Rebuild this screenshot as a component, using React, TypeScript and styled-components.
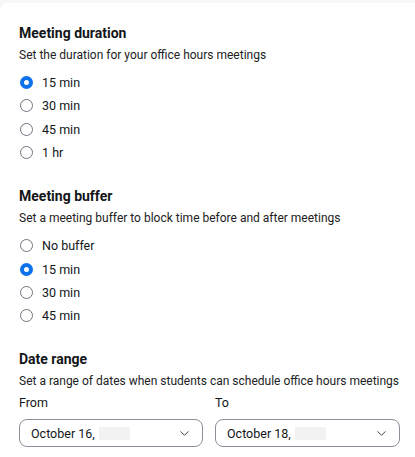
import React, { useState } from "react";
import styled, { createGlobalStyle } from "styled-components";

const GlobalStyle = createGlobalStyle`
  html, body {
    margin: 0;
    padding: 0;
    background: #f7f7f8;
  }
  body {
    font-family: Roboto, "Noto Sans", sans-serif;
    color: #131619;
  }
`;

const Card = styled.div`
  margin-top: 3px;
  background: #ffffff;
  border-top-left-radius: 8px;
  min-height: 454px;
  padding: 20px 10px 0 19px;
  box-sizing: border-box;
`;

const Section = styled.section`
  & + & {
    margin-top: 22px;
  }
`;

const Title = styled.h3`
  margin: 0;
  font-size: 14px;
  font-weight: 700;
  line-height: 20px;
`;

const Subtitle = styled.p`
  margin: 3px 0 7px;
  font-size: 12px;
  line-height: 18px;
  color: #222;
`;

const Options = styled.div`
  display: flex;
  flex-direction: column;
`;

const OptionRow = styled.label`
  display: flex;
  align-items: center;
  gap: 9px;
  height: 23.3px;
  font-size: 12.5px;
  cursor: pointer;
`;

const RadioDot = styled.span<{ $checked: boolean }>`
  width: 13px;
  height: 13px;
  border-radius: 50%;
  box-sizing: border-box;
  margin-left: 1px;
  border: ${(p) => (p.$checked ? "4.5px solid #0e72ed" : "1px solid #6e7680")};
  background: #fff;
`;

const Fields = styled.div`
  display: grid;
  grid-template-columns: 184px 185px;
  gap: 12px;
  margin-top: -3px;
`;

const FieldLabel = styled.div`
  font-size: 12.5px;
  line-height: 18px;
  margin-bottom: 7px;
`;

const Select = styled.div`
  display: flex;
  align-items: center;
  height: 26px;
  padding: 0 12px 0 11px;
  border: 1px solid #8a9099;
  border-radius: 8px;
  font-size: 12.5px;
`;

const Redacted = styled.span`
  width: 31px;
  height: 13px;
  margin-left: 4px;
  background: #f2f2f3;
`;

const Chevron = styled.svg`
  margin-left: auto;
`;

type Group = { title: string; subtitle: string; options: string[]; initial: string };

const groups: Group[] = [
  {
    title: "Meeting duration",
    subtitle: "Set the duration for your office hours meetings",
    options: ["15 min", "30 min", "45 min", "1 hr"],
    initial: "15 min",
  },
  {
    title: "Meeting buffer",
    subtitle: "Set a meeting buffer to block time before and after meetings",
    options: ["No buffer", "15 min", "30 min", "45 min"],
    initial: "15 min",
  },
];

const RadioGroup: React.FC<{ group: Group }> = ({ group }) => {
  const [value, setValue] = useState(group.initial);
  return (
    <Section>
      <Title>{group.title}</Title>
      <Subtitle>{group.subtitle}</Subtitle>
      <Options>
        {group.options.map((opt) => (
          <OptionRow key={opt} onClick={() => setValue(opt)}>
            <RadioDot $checked={value === opt} />
            {opt}
          </OptionRow>
        ))}
      </Options>
    </Section>
  );
};

const DateSelect: React.FC<{ label: string; date: string }> = ({ label, date }) => (
  <div>
    <FieldLabel>{label}</FieldLabel>
    <Select>
      {date}
      <Redacted />
      <Chevron width="11" height="11" viewBox="0 0 12 12" fill="none">
        <path d="M2 4l4 4 4-4" stroke="#333" strokeWidth="1" strokeLinecap="round" strokeLinejoin="round" />
      </Chevron>
    </Select>
  </div>
);

export default function App() {
  return (
    <>
      <GlobalStyle />
      <Card>
        {groups.map((g) => (
          <RadioGroup key={g.title} group={g} />
        ))}
        <Section>
          <Title>Date range</Title>
          <Subtitle>Set a range of dates when students can schedule office hours meetings</Subtitle>
          <Fields>
            <DateSelect label="From" date="October 16," />
            <DateSelect label="To" date="October 18," />
          </Fields>
        </Section>
      </Card>
    </>
  );
}
